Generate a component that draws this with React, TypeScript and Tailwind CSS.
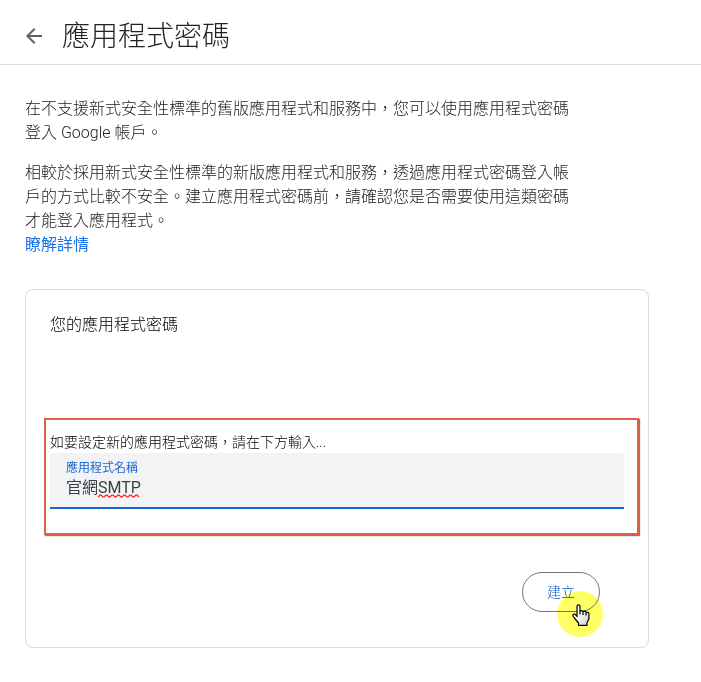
import React from 'react';

function BackArrow() {
  return (
    <svg viewBox="0 0 24 24" className="h-6 w-6 fill-[#5f6368]" aria-hidden="true">
      <path d="M20 11H7.83l5.59-5.59L12 4l-8 8 8 8 1.41-1.41L7.83 13H20v-2z" />
    </svg>
  );
}

function Squiggle() {
  return (
    <svg
      viewBox="0 0 44 4"
      className="pointer-events-none absolute left-12 top-[41px] h-1 w-11"
      fill="none"
      stroke="#f01818"
      strokeWidth="1.2"
      aria-hidden="true"
    >
      <path d="M0 3l2-2h1l2 2h1l2-2h1l2 2h1l2-2h1l2 2h1l2-2h1l2 2h1l2-2h1l2 2h1l2-2h1l2 2h1l2-2h1l2 2" />
    </svg>
  );
}

function HandPointer() {
  return (
    <svg viewBox="0 0 18 22" className="absolute left-[15px] top-[13px] h-[22px] w-[18px]" aria-hidden="true">
      <defs>
        <linearGradient id="hand" x1="0" y1="0" x2="1" y2="1">
          <stop offset="0.4" stopColor="#fff" />
          <stop offset="1" stopColor="#ccc" />
        </linearGradient>
      </defs>
      <path
        d="M5 12.500V2.300a1.500 1.500 0 0 1 3 0V7q1.600-1 3 .4 1.800-.7 3 .8 2.900-.3 2.900 1.900v5L15 18.500v2.800H6.500V19L2 13.500Q.3 11.300 1.300 10.500 2.500 9.700 3.800 11z"
        fill="url(#hand)"
        stroke="#000"
        strokeWidth="1.2"
        strokeLinejoin="round"
      />
      <path d="M8 6.500v4M11 7.500v3.500M14 8.500v3" stroke="#000" strokeWidth="1.2" />
    </svg>
  );
}

export default function App() {
  return (
    <div className="min-h-screen bg-white font-['Roboto','Noto_Sans_CJK_TC',sans-serif] font-light text-[#202124]">
      <header className="flex h-[65px] items-center gap-4 border-b border-[#dadce0] px-[22px] pt-2">
        <button type="button" aria-label="返回" className="shrink-0">
          <BackArrow />
        </button>
        <h1 className="pt-0.5 text-[28px] leading-9">應用程式密碼</h1>
      </header>

      <main className="pt-8 pr-[52px] pb-[34px] pl-[25px]">
        <div className="max-w-[552px] space-y-4 text-base leading-6">
          <p>在不支援新式安全性標準的舊版應用程式和服務中，您可以使用應用程式密碼登入 Google 帳戶。</p>
          <p>
            相較於採用新式安全性標準的新版應用程式和服務，透過應用程式密碼登入帳戶的方式比較不安全。建立應用程式密碼前，請確認您是否需要使用這類密碼才能登入應用程式。
            <br />
            <a href="#details" className="font-normal text-[#1a73e8]">
              瞭解詳情
            </a>
          </p>
        </div>

        <section className="mt-8 rounded-lg border border-[#dadce0] pb-[35px]">
          <h2 className="px-6 pt-[23px] text-base leading-6 text-black">您的應用程式密碼</h2>

          <form onSubmit={(e) => e.preventDefault()}>
            <div className="mt-[81px] mr-[9px] ml-[18px] border-2 border-[#db6245] pt-3 pr-[13px] pb-6 pl-1 shadow-[1px_1px_1px_rgba(0,0,0,0.5)]">
              <p className="pb-px text-sm leading-5 text-black">如要設定新的應用程式密碼，請在下方輸入...</p>
              <div className="relative rounded-t border-b-2 border-[#1967d2] bg-[#f1f3f4] px-4 pt-[7px] pb-[7px]">
                <label htmlFor="app-name" className="block text-xs leading-4 font-normal text-[#1967d2]">
                  應用程式名稱
                </label>
                <input
                  id="app-name"
                  type="text"
                  defaultValue="官網SMTP"
                  spellCheck={false}
                  className="block h-6 w-full bg-transparent text-base font-normal text-[#3c4043] outline-none"
                />
                <Squiggle />
              </div>
            </div>

            <div className="mt-[37px] flex justify-end pr-12">
              <div className="relative">
                <button
                  type="submit"
                  className="h-10 rounded-full border border-[#747775] px-6 text-sm leading-5 text-[#0b57d0]"
                >
                  建立
                </button>
                <div className="pointer-events-none absolute left-[35px] top-[19px] h-[46px] w-[46px] rounded-full bg-[#ffff66] mix-blend-multiply" />
                <div className="pointer-events-none absolute left-[35px] top-[19px] h-[46px] w-[46px]">
                  <HandPointer />
                </div>
              </div>
            </div>
          </form>
        </section>
      </main>
    </div>
  );
}
